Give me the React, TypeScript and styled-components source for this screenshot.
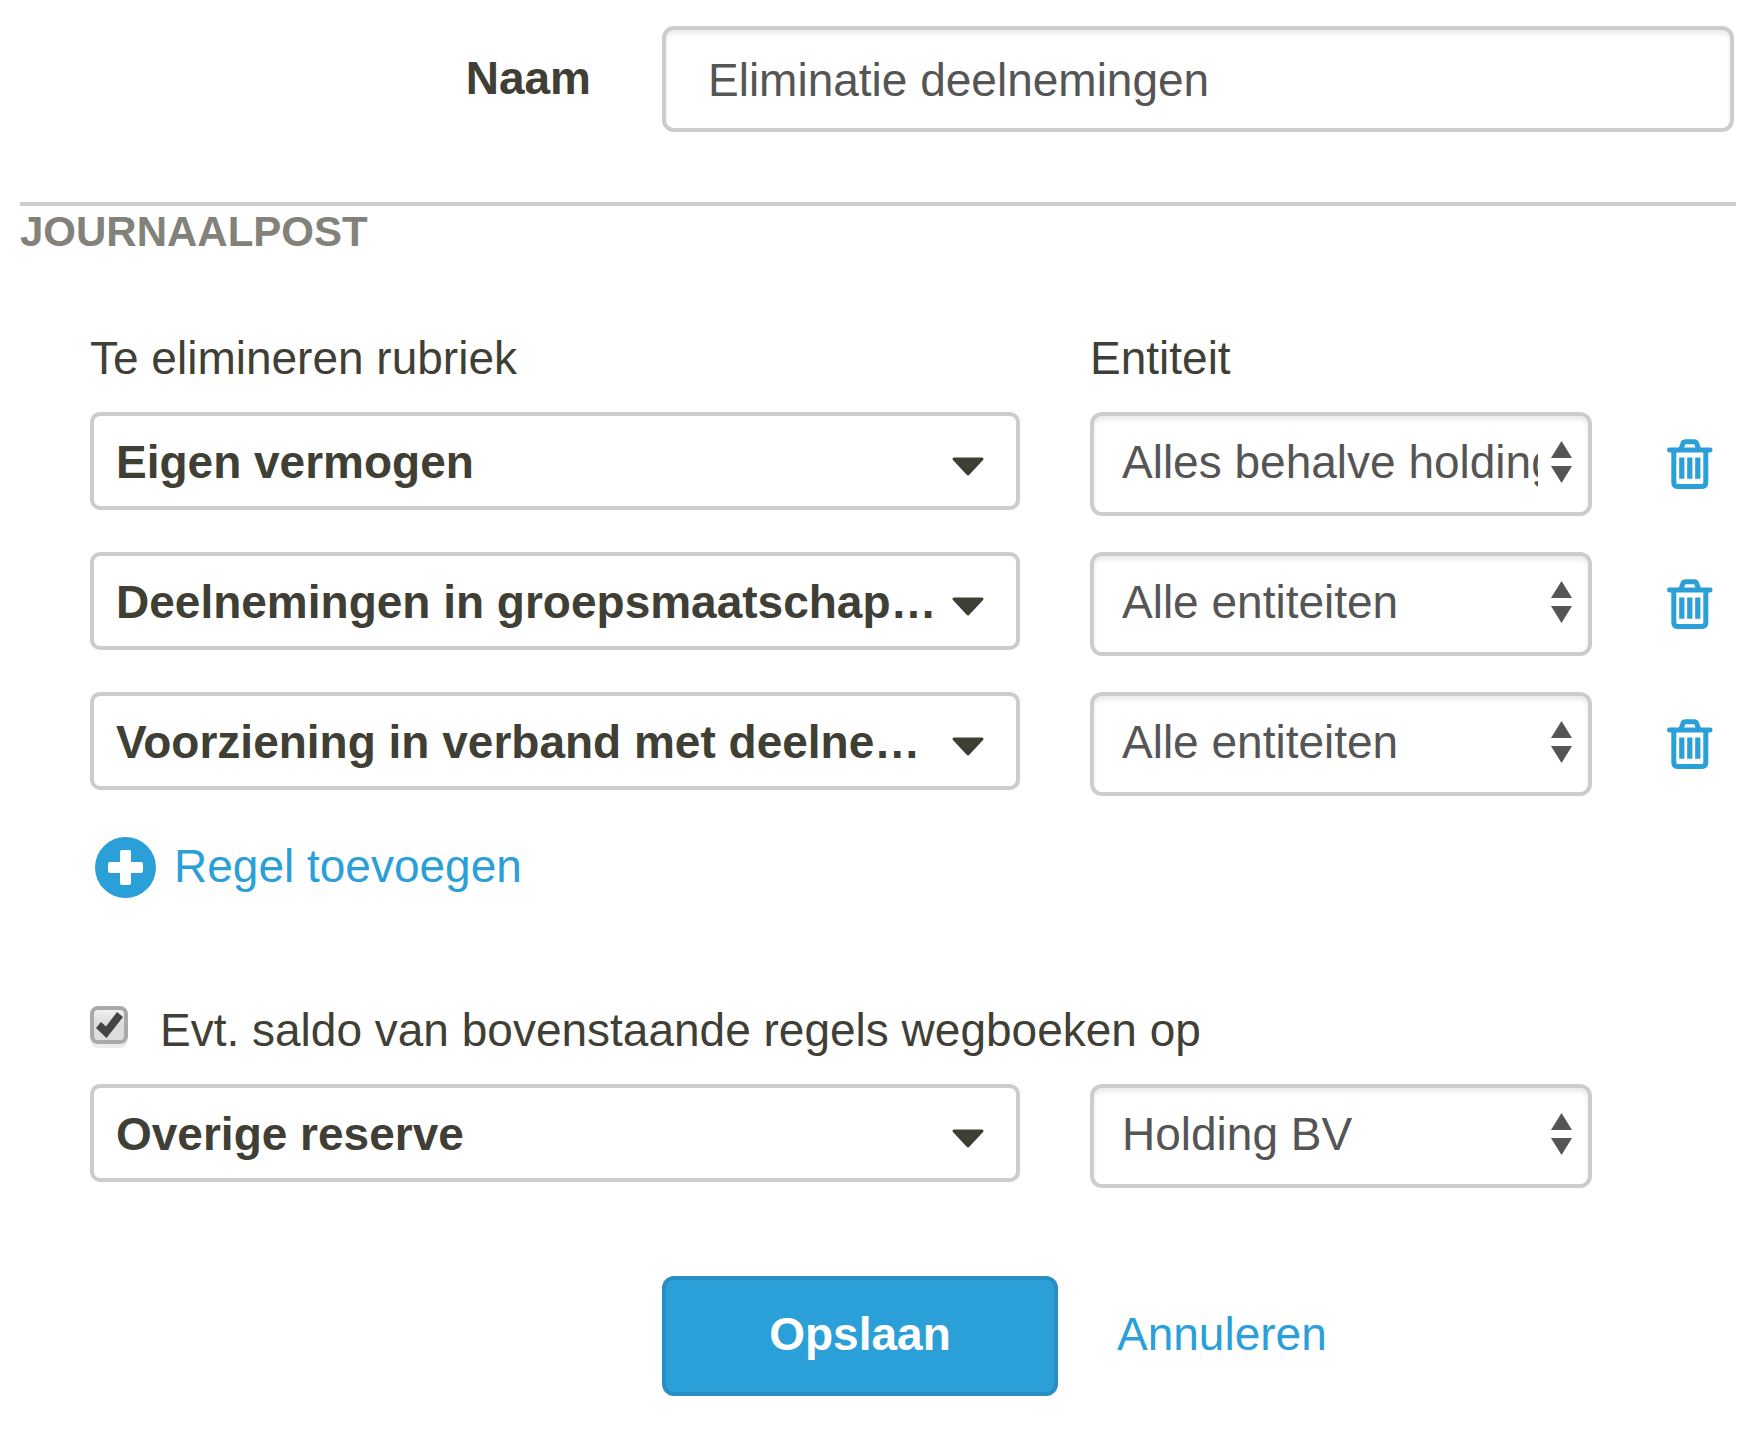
import React, { useState } from "react";
import styled, { createGlobalStyle } from "styled-components";

const ink = "#3f3f35";
const blue = "#2b9fd8";
const line = "#cccccc";

const GlobalStyle = createGlobalStyle`
  *, *::before, *::after { box-sizing: border-box; }
  body {
    margin: 0;
    background: #ffffff;
    color: ${ink};
    font-family: "Liberation Sans", Arial, Helvetica, sans-serif;
    font-size: 46px;
    line-height: 52px;
  }
  input, select, button { font: inherit; }
`;

const Form = styled.form`
  padding: 26px 26px 34px 20px;
`;

const NameRow = styled.div`
  display: grid;
  grid-template-columns: 571fr 1072fr;
  column-gap: 71px;
  align-items: center;
  padding-right: 2px;
`;

const NameLabel = styled.label`
  padding-bottom: 2px;
  font-weight: bold;
  text-align: right;
`;

const TextInput = styled.input`
  width: 100%;
  min-width: 0;
  height: 106px;
  padding: 2px 42px 0;
  border: 4px solid ${line};
  border-radius: 12px;
  background: #ffffff;
  box-shadow: inset 0 4px 4px rgba(0, 0, 0, 0.08);
  color: #555555;
`;

const Section = styled.section`
  margin-top: 70px;
  border-top: 4px solid ${line};
`;

const SectionTitle = styled.h2`
  margin: 0 0 74px;
  color: #83827a;
  font-size: 42px;
  line-height: 52px;
  font-weight: bold;
  text-transform: uppercase;
`;

const Lines = styled.div`
  padding: 0 23px 0 70px;
`;

const LineGrid = styled.div<{ $top?: number }>`
  display: grid;
  grid-template-columns: minmax(0, 930fr) minmax(0, 502fr) 51px;
  column-gap: 70px;
  margin-top: ${({ $top = 0 }) => $top}px;
`;

const Picker = styled.div`
  display: grid;
  align-self: start;
`;

const RubricSelect = styled.select`
  grid-area: 1 / 1;
  width: 100%;
  min-width: 0;
  height: 98px;
  padding: 2px 76px 0 22px;
  appearance: none;
  border: 4px solid ${line};
  border-radius: 10px;
  background: #ffffff;
  color: ${ink};
  font-weight: bold;
`;

const EntitySelect = styled.select`
  grid-area: 1 / 1;
  width: 100%;
  min-width: 0;
  height: 104px;
  padding: 0 50px 4px 28px;
  appearance: none;
  border: 4px solid ${line};
  border-radius: 12px;
  background: #ffffff;
  box-shadow: inset 0 4px 4px rgba(0, 0, 0, 0.08);
  color: #555555;
`;

const PickerIcon = styled.svg<{ $right: number }>`
  grid-area: 1 / 1;
  align-self: center;
  justify-self: end;
  margin-right: ${({ $right }) => $right}px;
  pointer-events: none;
`;

const IconButton = styled.button`
  display: flex;
  align-self: center;
  padding: 0 0 0 5px;
  border: 0;
  background: none;
  cursor: pointer;
`;

const AddButton = styled.button`
  display: flex;
  align-items: center;
  gap: 18px;
  margin-top: 41px;
  padding: 0 0 0 5px;
  border: 0;
  background: none;
  color: ${blue};
  cursor: pointer;
`;

const AddText = styled.span`
  padding-bottom: 4px;
`;

const BalanceRow = styled.div`
  display: flex;
  align-items: center;
  gap: 32px;
  margin-top: 106px;
`;

const CheckBox = styled.span`
  display: grid;
  flex: none;
  padding-bottom: 10px;
`;

const CheckInput = styled.input`
  grid-area: 1 / 1;
  width: 38px;
  height: 38px;
  margin: 0;
  appearance: none;
  border: 4px solid #a9a9a9;
  border-radius: 8px;
  background: linear-gradient(#f1f1f1, #dcdcdc 45%, #dedede);
  box-shadow: 0 4px 0 #ececec;

  & + svg { visibility: hidden; }
  &:checked + svg { visibility: visible; }
`;

const CheckMark = styled.svg`
  grid-area: 1 / 1;
  pointer-events: none;
`;

const Actions = styled.div`
  display: grid;
  grid-template-columns: 571fr 1072fr;
  column-gap: 71px;
  margin-top: 88px;
  padding-right: 2px;
`;

const ActionGroup = styled.div`
  grid-column: 2;
  display: flex;
  align-items: center;
  gap: 59px;
`;

const SaveButton = styled.button`
  width: 396px;
  height: 120px;
  padding: 0 0 4px;
  border: 4px solid #278fc2;
  border-radius: 12px;
  background: ${blue};
  color: #ffffff;
  font-weight: bold;
  cursor: pointer;
`;

const CancelLink = styled.a`
  padding-bottom: 4px;
  color: ${blue};
  text-decoration: none;
`;

const rubrics = [
  "Eigen vermogen",
  "Deelnemingen in groepsmaatschap…",
  "Voorziening in verband met deelne…",
  "Overige reserve",
];
const entities = ["Alles behalve holding", "Alle entiteiten", "Holding BV"];

type JournalLine = { id: number; rubric: string; entity: string };

function RubricPicker({ value, label }: { value: string; label: string }) {
  return (
    <Picker>
      <RubricSelect defaultValue={value} aria-label={label}>
        {rubrics.map((name) => (
          <option key={name}>{name}</option>
        ))}
      </RubricSelect>
      <PickerIcon $right={36} width="32" height="30" viewBox="0 0 32 30" aria-hidden="true">
        <path
          d="M2 13 H30 L16 28 Z"
          fill={ink}
          stroke={ink}
          strokeWidth="3"
          strokeLinejoin="round"
        />
      </PickerIcon>
    </Picker>
  );
}

function EntityPicker({ value, label }: { value: string; label: string }) {
  return (
    <Picker>
      <EntitySelect defaultValue={value} aria-label={label}>
        {entities.map((name) => (
          <option key={name}>{name}</option>
        ))}
      </EntitySelect>
      <PickerIcon $right={20} width="21" height="46" viewBox="0 0 21 46" aria-hidden="true">
        <path d="M10.5 0 L21 17 H0 Z M0 25 H21 L10.5 42 Z" fill="#555555" />
      </PickerIcon>
    </Picker>
  );
}

function TrashIcon() {
  return (
    <svg width="46" height="50" viewBox="0 0 46 50" fill="none" stroke={blue} aria-hidden="true">
      <path d="M2.4 11 H43.2" strokeWidth="4.8" strokeLinecap="round" />
      <path d="M14 10 L16 4.4 Q16.6 2.8 18.4 2.8 H27.2 Q29 2.8 29.6 4.4 L31.6 10" strokeWidth="5" />
      <path d="M6.8 12 V43.6 Q6.8 47.4 10.4 47.4 H35.2 Q38.8 47.4 38.8 43.6 V12" strokeWidth="5" />
      <path d="M14.8 18.6 V39.8 M22.8 18.6 V39.8 M30.8 18.6 V39.8" strokeWidth="5.2" />
    </svg>
  );
}

export default function App() {
  const [lines, setLines] = useState<JournalLine[]>([
    { id: 1, rubric: rubrics[0], entity: entities[0] },
    { id: 2, rubric: rubrics[1], entity: entities[1] },
    { id: 3, rubric: rubrics[2], entity: entities[1] },
  ]);

  const addLine = () =>
    setLines([...lines, { id: Date.now(), rubric: rubrics[0], entity: entities[1] }]);
  const removeLine = (id: number) => setLines(lines.filter((item) => item.id !== id));

  return (
    <>
      <GlobalStyle />
      <Form onSubmit={(event) => event.preventDefault()}>
        <NameRow>
          <NameLabel htmlFor="name">Naam</NameLabel>
          <TextInput id="name" type="text" defaultValue="Eliminatie deelnemingen" />
        </NameRow>

        <Section>
          <SectionTitle>Journaalpost</SectionTitle>
          <Lines>
            <LineGrid>
              <span>Te elimineren rubriek</span>
              <span>Entiteit</span>
            </LineGrid>
            {lines.map((item, index) => (
              <LineGrid key={item.id} $top={index === 0 ? 28 : 36}>
                <RubricPicker value={item.rubric} label="Te elimineren rubriek" />
                <EntityPicker value={item.entity} label="Entiteit" />
                <IconButton type="button" aria-label="Verwijderen" onClick={() => removeLine(item.id)}>
                  <TrashIcon />
                </IconButton>
              </LineGrid>
            ))}
            <AddButton type="button" onClick={addLine}>
              <svg width="61" height="61" viewBox="0 0 61 61" aria-hidden="true">
                <circle cx="30.5" cy="30.5" r="30.5" fill={blue} />
                <rect x="13" y="25" width="35" height="11" rx="2" fill="#ffffff" />
                <rect x="25" y="13" width="11" height="35" rx="2" fill="#ffffff" />
              </svg>
              <AddText>Regel toevoegen</AddText>
            </AddButton>

            <BalanceRow>
              <CheckBox>
                <CheckInput id="balance" type="checkbox" defaultChecked />
                <CheckMark width="38" height="38" viewBox="0 0 38 38" aria-hidden="true">
                  <path d="M6 22 L11 16 L16 20.5 L27 6 L33 11 L16.5 32 Z" fill="#444444" />
                </CheckMark>
              </CheckBox>
              <label htmlFor="balance">Evt. saldo van bovenstaande regels wegboeken op</label>
            </BalanceRow>
            <LineGrid $top={28}>
              <RubricPicker value={rubrics[3]} label="Rubriek voor saldo" />
              <EntityPicker value={entities[2]} label="Entiteit voor saldo" />
            </LineGrid>
          </Lines>
        </Section>

        <Actions>
          <ActionGroup>
            <SaveButton type="submit">Opslaan</SaveButton>
            <CancelLink href="#">Annuleren</CancelLink>
          </ActionGroup>
        </Actions>
      </Form>
    </>
  );
}
